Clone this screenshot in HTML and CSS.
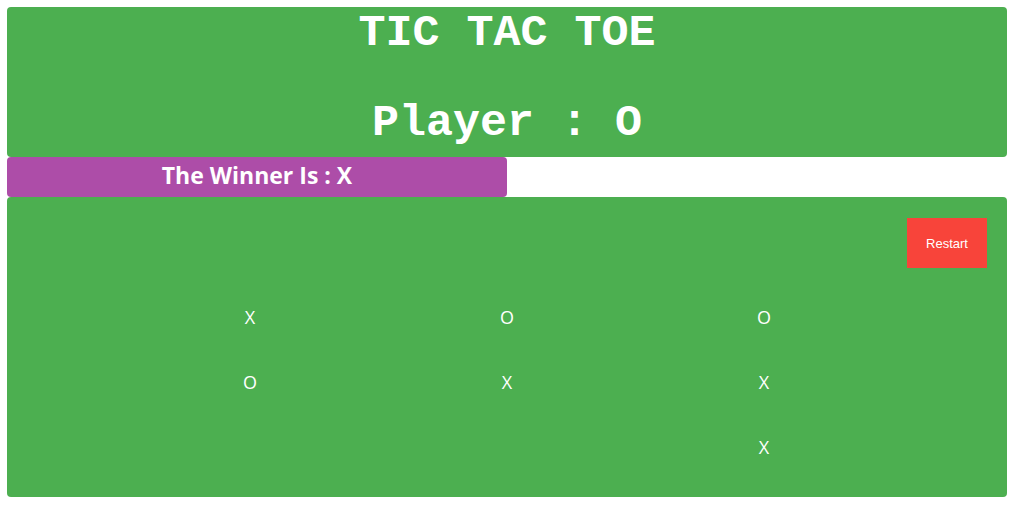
FILE: index.html
```html
<!DOCTYPE html>
<html>
<head>
<meta charset="utf-8">
<title>Tic Tac Toe</title>
<link rel="stylesheet" href="styles.css">
</head>
<body>
<div class="app">
  <header class="header">
    <div class="title">TIC TAC TOE</div>
    <div class="player">Player : O</div>
  </header>
  <div class="winner">The Winner Is : X</div>
  <section class="board-box">
    <div class="controls">
      <button class="restart">Restart</button>
    </div>
    <div class="board">
      <div class="cell">X</div>
      <div class="cell">O</div>
      <div class="cell">O</div>
      <div class="cell">O</div>
      <div class="cell">X</div>
      <div class="cell">X</div>
      <div class="cell"></div>
      <div class="cell"></div>
      <div class="cell">X</div>
    </div>
  </section>
</div>
</body>
</html>
```
FILE: styles.css
```css
html, body {
  margin: 0;
  padding: 0;
  background: #ffffff;
}
.app {
  padding: 7px;
  width: 1000px;
  display: flex;
  flex-direction: column;
}
.header {
  background: #4caf50;
  border-radius: 4px;
  height: 150px;
  box-sizing: border-box;
  padding-top: 4px;
  display: flex;
  flex-direction: column;
  align-items: center;
  gap: 45px;
  color: #ffffff;
  font-family: "Liberation Mono", "Courier New", monospace;
  font-weight: bold;
  font-size: 45px;
}
.title, .player {
  line-height: 45px;
  white-space: pre;
}
.winner {
  width: 500px;
  height: 40px;
  box-sizing: border-box;
  padding-bottom: 4px;
  background: #ad4da8;
  border-radius: 4px;
  color: #ffffff;
  font-family: "Open Sans", "Noto Sans", sans-serif;
  font-weight: bold;
  font-size: 23px;
  display: flex;
  align-items: center;
  justify-content: center;
}
.board-box {
  background: #4caf50;
  border-radius: 4px;
  height: 300px;
  box-sizing: border-box;
  padding: 21px 20px 0 20px;
  display: flex;
  flex-direction: column;
}
.controls {
  display: flex;
  justify-content: flex-end;
}
.restart {
  width: 80px;
  height: 50px;
  background: #f8443a;
  color: #ffffff;
  border: none;
  font-family: "Liberation Sans", Arial, sans-serif;
  font-size: 13px;
  padding: 0;
}
.board {
  margin: 16px auto 0 auto;
  width: 771px;
  display: grid;
  grid-template-columns: repeat(3, 257px);
  grid-template-rows: repeat(3, 65px);
}
.cell {
  display: flex;
  align-items: center;
  justify-content: center;
  color: #ffffff;
  font-family: "Open Sans", "Noto Sans", sans-serif;
  font-size: 18px;
}
```
